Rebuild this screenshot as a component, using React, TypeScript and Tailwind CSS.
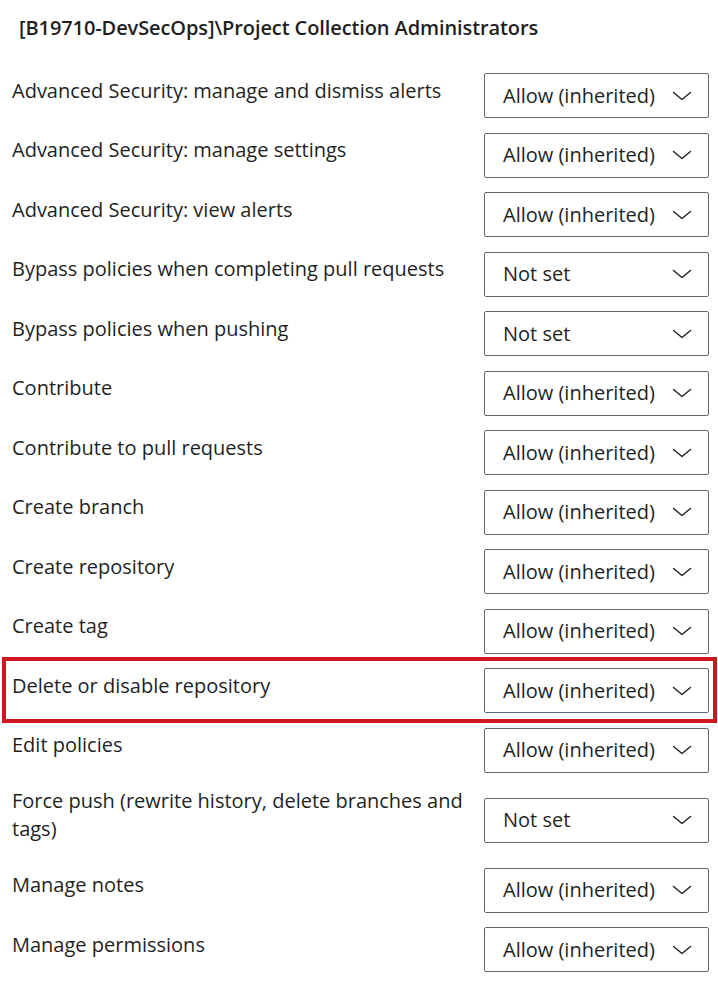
import React from "react";

type Row = { label: string; value: string; highlight?: boolean };

const rows: Row[] = [
  { label: "Advanced Security: manage and dismiss alerts", value: "Allow (inherited)" },
  { label: "Advanced Security: manage settings", value: "Allow (inherited)" },
  { label: "Advanced Security: view alerts", value: "Allow (inherited)" },
  { label: "Bypass policies when completing pull requests", value: "Not set" },
  { label: "Bypass policies when pushing", value: "Not set" },
  { label: "Contribute", value: "Allow (inherited)" },
  { label: "Contribute to pull requests", value: "Allow (inherited)" },
  { label: "Create branch", value: "Allow (inherited)" },
  { label: "Create repository", value: "Allow (inherited)" },
  { label: "Create tag", value: "Allow (inherited)" },
  { label: "Delete or disable repository", value: "Allow (inherited)", highlight: true },
  { label: "Edit policies", value: "Allow (inherited)" },
  { label: "Force push (rewrite history, delete branches and tags)", value: "Not set" },
  { label: "Manage notes", value: "Allow (inherited)" },
  { label: "Manage permissions", value: "Allow (inherited)" },
];

function Chevron() {
  return (
    <svg width="20" height="10" viewBox="0 0 20 10" fill="none" className="shrink-0">
      <path d="M1.5 1.5 L10 8.5 L18.5 1.5" stroke="#1f1f1f" strokeWidth="1.4" strokeLinecap="round" strokeLinejoin="round" />
    </svg>
  );
}

export default function App() {
  return (
    <div
      className="w-[718px] min-h-[983px] bg-white text-[#1f1f1f] overflow-hidden"
      style={{ fontFamily: '"Open Sans", "Noto Sans", Arial, sans-serif' }}
    >
      <div className="pl-[19px] pt-[15px] pb-[25px] text-[20px] leading-[26px] font-semibold tracking-[-0.1px]">
        [B19710-DevSecOps]\Project Collection Administrators
      </div>
      <div className="flex flex-col">
        {rows.map((r) => (
          <div key={r.label} className="relative flex min-h-[59.5px] items-center pl-[12px] pr-[9px]">
            {r.highlight && (
              <div className="pointer-events-none absolute left-[2px] right-[1px] -top-[4px] -bottom-[2px] border-[4px] border-[#d0161e]" />
            )}
            <div className="flex-1 pr-[14px] pt-[7px] pb-[17.5px] text-[20px] leading-[28px]">
              {r.label}
            </div>
            <div className="flex h-[45px] w-[225px] shrink-0 items-center justify-between rounded-[2px] border border-[#5f6873] pl-[18px] pr-[16px] text-[20px]">
              <span>{r.value}</span>
              <Chevron />
            </div>
          </div>
        ))}
      </div>
    </div>
  );
}
